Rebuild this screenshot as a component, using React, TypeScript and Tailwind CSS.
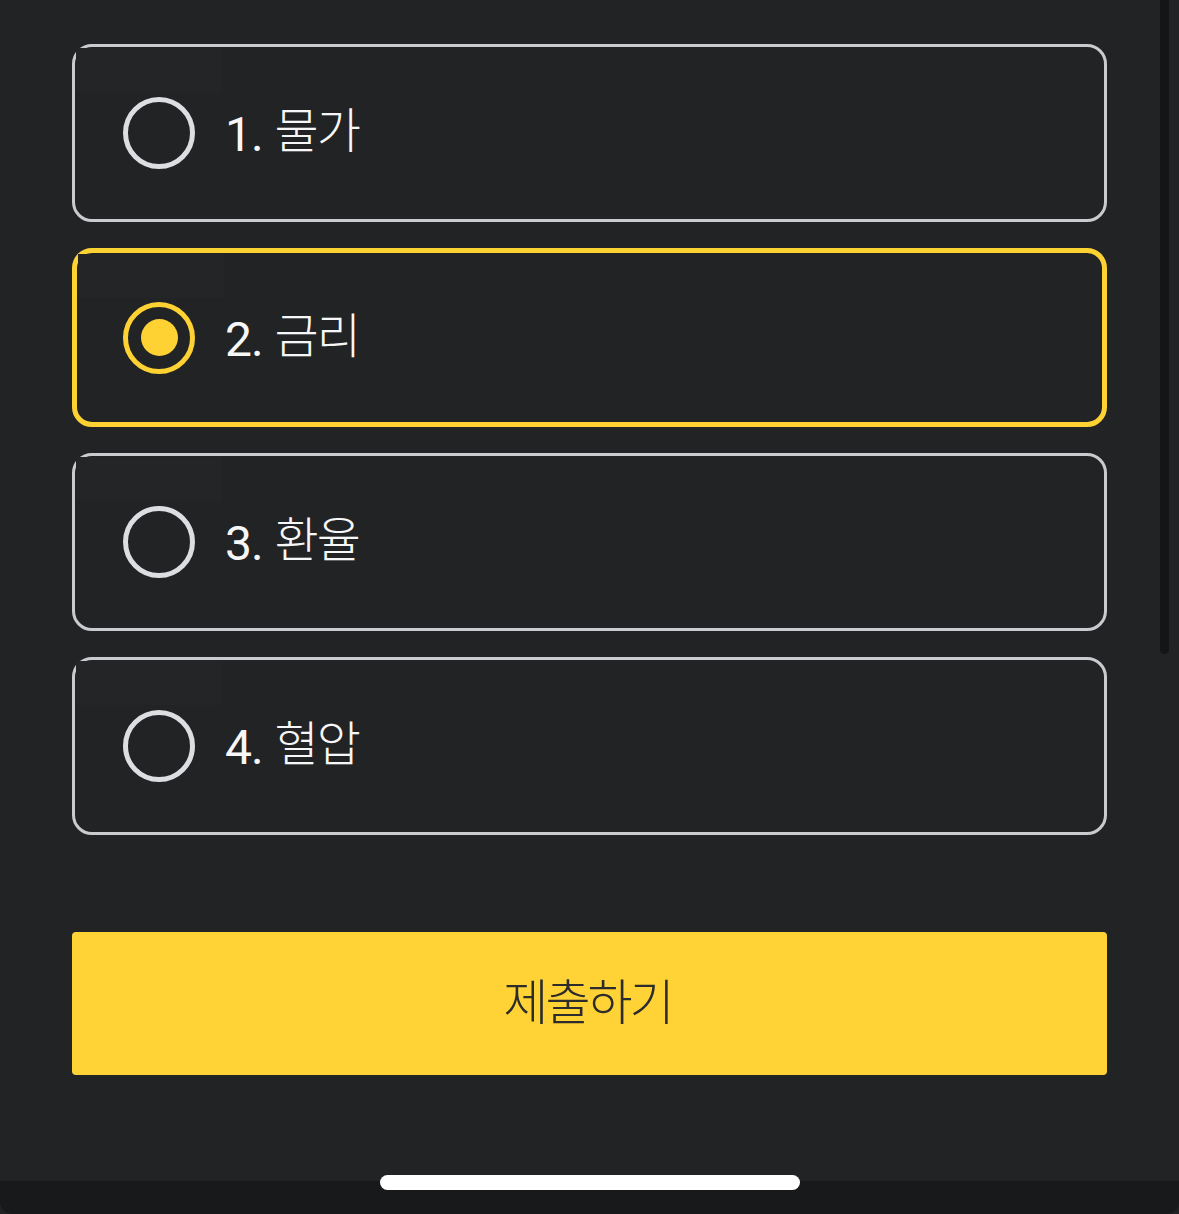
import { useState } from 'react'

const options = [
  { num: '1.', word: '물가' },
  { num: '2.', word: '금리' },
  { num: '3.', word: '환율' },
  { num: '4.', word: '혈압' },
]

const Radio = ({ checked }: { checked: boolean }) =>
  checked ? (
    <div className="w-[72px] h-[72px] shrink-0 rounded-full border-[5px] border-[#ffd233] flex items-center justify-center">
      <div className="w-[37px] h-[37px] rounded-full bg-[#ffd233]" />
    </div>
  ) : (
    <div className="w-[72px] h-[72px] shrink-0 rounded-full border-[5px] border-[#dcdee1]" />
  )

const App = () => {
  const [selected, setSelected] = useState(1)

  return (
    <div
      className="relative w-[1179px] h-[1214px] bg-[#222325] flex flex-col overflow-hidden"
      style={{ fontFamily: 'Roboto, "Noto Sans CJK KR", sans-serif' }}
    >
      <div className="flex-1 pt-[44px] px-[72px] flex flex-col gap-[97px]">
        <div className="flex flex-col gap-[26px]">
          {options.map((opt, i) => {
            const active = i === selected
            return (
              <button
                key={opt.word}
                onClick={() => setSelected(i)}
                className={
                  active
                    ? 'relative h-[179px] rounded-[20px] border-[5px] border-[#ffd233] pl-[46px] flex items-center gap-[30px] text-left'
                    : 'relative h-[178px] rounded-[20px] border-[3px] border-[#c9cbce] pl-[48px] flex items-center gap-[30px] text-left'
                }
              >
                {/* faint highlight patch seen in the top-left of each card */}
                <div className="absolute left-[1px] top-[1px] w-[146px] h-[44px] bg-[#242527]" />
                <div className="relative">
                  <Radio checked={active} />
                </div>
                <span className="relative pb-[4px] text-[48px] leading-none text-[#f7f7f7]">
                  <span className="tracking-[-1px]">{opt.num}</span>{' '}
                  <span
                    className="align-[3px] font-light tracking-[-2px]"
                    style={{ fontFamily: '"Noto Sans CJK KR", sans-serif' }}
                  >
                    {opt.word}
                  </span>
                </span>
              </button>
            )
          })}
        </div>

        <button className="w-full h-[143px] rounded-[4px] bg-[#ffd335] flex items-center justify-center pb-[10px]">
          <span
            className="text-[49px] leading-none font-light text-[#2c2c2c] tracking-[-3px] pr-[4px]"
            style={{ fontFamily: '"Noto Sans CJK KR", sans-serif' }}
          >
            제출하기
          </span>
        </button>
      </div>

      <div className="h-[33px] bg-[#18191b] rounded-b-[12px]" />

      {/* scrollbar */}
      <div className="absolute right-[10px] top-0 w-[9px] h-[654px] rounded-b-full bg-[#141517]" />

      {/* home indicator */}
      <div className="absolute left-[380px] top-[1175px] w-[420px] h-[15px] rounded-full bg-white" />
    </div>
  )
}

export default App
